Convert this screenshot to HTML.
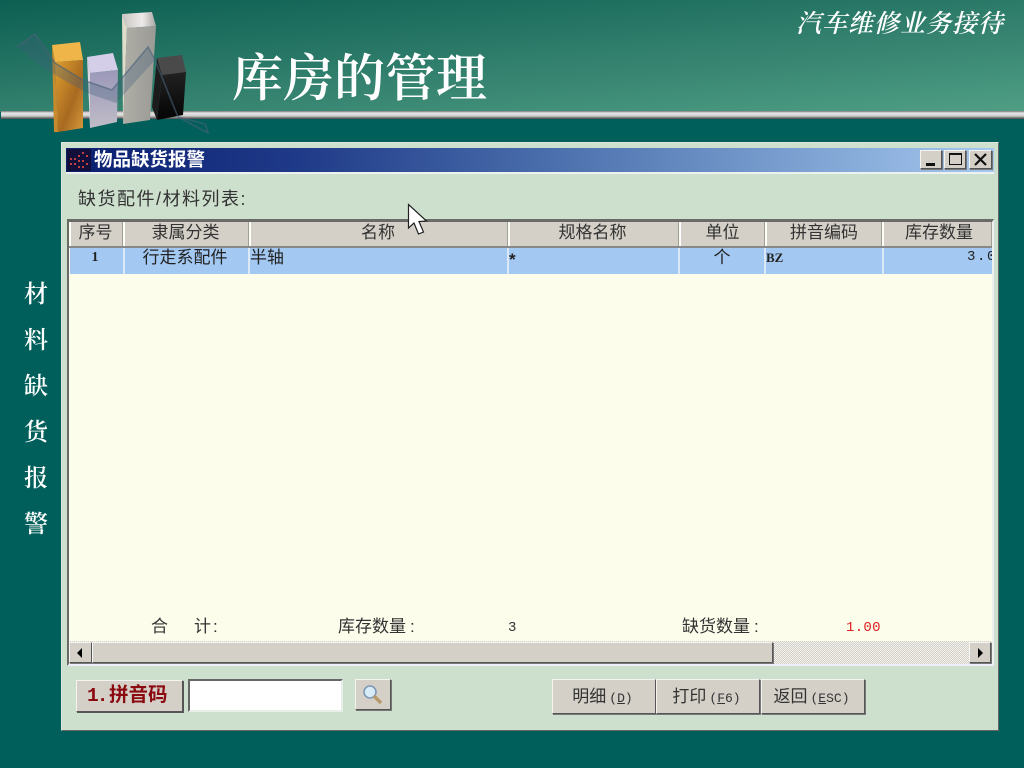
<!DOCTYPE html>
<html><head><meta charset="utf-8"><style>
html,body{margin:0;padding:0}
body{width:1024px;height:768px;overflow:hidden;position:relative;background:#005f5a;font-family:"Liberation Sans","Noto Sans CJK SC",sans-serif;}
div,span.a{position:absolute;white-space:nowrap}
.s{font-family:"Liberation Serif","Noto Serif CJK SC",serif;}
.h{top:222px;height:24px;background:#d4d0c8;border-left:1px solid #fff;border-right:1px solid #a0a09a;box-sizing:border-box;text-align:center;font-size:17px;line-height:22px;color:#333;}
.c{top:247px;height:27px;box-sizing:border-box;font-size:17px;line-height:22px;color:#222;}
.v{top:248px;width:2px;height:26px;background:#dbe8f5}
.b{background:#d4d0c8;border:1px solid;border-color:#f4f4f0 #555 #555 #f4f4f0;box-sizing:border-box;box-shadow:1px 1px 0 #777;}
.t{font-size:17px;color:#333;line-height:20px}
.k{text-align:center;font-size:17px;line-height:33px;color:#333;padding-right:3px}
.k i{font:13px/1 "Liberation Mono",monospace;margin-left:3px}
</style></head><body>
<div style="left:0;top:0;width:1024px;height:112px;background:linear-gradient(175deg,#0c5f52 0%,#2f7d6b 50%,#4f9e84 100%)"></div>
<div style="left:1px;top:111px;width:1023px;height:8px;background:linear-gradient(#777 0,#e6e6e6 25%,#cfcfcf 60%,#444 100%)"></div>

<svg style="position:absolute;left:0;top:0" width="230" height="140" viewBox="0 0 230 140">
<defs>
<linearGradient id="o" x1="0" y1="0" x2="1" y2="1"><stop offset="0" stop-color="#e0a030"/><stop offset=".6" stop-color="#a86a20"/><stop offset="1" stop-color="#d89a3c"/></linearGradient>
<linearGradient id="l" x1="0" y1="0" x2="0" y2="1"><stop offset="0" stop-color="#9a98b8"/><stop offset="1" stop-color="#c0bcc8"/></linearGradient>
<linearGradient id="g" x1="0" y1="0" x2="1" y2="0"><stop offset="0" stop-color="#b0aea6"/><stop offset="1" stop-color="#9a9a96"/></linearGradient>
<linearGradient id="gt" x1="0" y1="0" x2="1" y2="0"><stop offset="0" stop-color="#c8c4c0"/><stop offset=".6" stop-color="#eeeaea"/><stop offset="1" stop-color="#a8a6a2"/></linearGradient>
<linearGradient id="k" x1="0" y1="0" x2="0" y2="1"><stop offset="0" stop-color="#222"/><stop offset="1" stop-color="#040404"/></linearGradient>
</defs>
<polygon points="52,45 55,62 58,132 54,132" fill="#c78a2c"/>
<polygon points="52,45 80,42 83,60 55,62" fill="#efb548"/>
<polygon points="55,62 83,60 83,128 58,132" fill="url(#o)"/>
<polygon points="87,57 90,73 90,128" fill="#dcd8e0"/>
<polygon points="87,57 113,53 118,70 90,73" fill="#d4cee8"/>
<polygon points="90,73 118,70 117,122 90,128" fill="url(#l)"/>
<polygon points="122,14 127,28 123,124" fill="#e0dccc"/>
<polygon points="122,14 152,12 156,26 127,28" fill="url(#gt)"/>
<polygon points="127,28 156,26 150,120 123,124" fill="url(#g)"/>
<polygon points="157,58 182,55 186,72 162,75" fill="#4a4a4a"/>
<polygon points="157,58 162,75 157,120 152,107" fill="#1c1c1c"/>
<polygon points="162,75 186,72 183,115 157,120" fill="url(#k)"/>
<polygon points="17,47 35,34 55,63 83,80 112,90 148,47 155,60 116,103 87,93 55,75 43,68" fill="#3d5d78" fill-opacity=".32"/>
<path d="M17,47 L35,34 L55,63 L83,80 L112,90 L148,47 L155,60 L178,117 L208,133 L205,124 L178,117" fill="none" stroke="#4a6078" stroke-opacity=".6" stroke-width="1.6"/>
</svg>

<div class="s" style="left:232px;top:47px;font-size:51px;line-height:66px;color:#fff;font-weight:600">库房的管理</div>
<div class="s" style="left:796px;top:10px;font-size:25px;line-height:30px;color:#fff;font-style:italic;font-weight:600;letter-spacing:1px">汽车维修业务接待</div>

<div class="s" style="left:24px;top:272px;width:24px;font-size:24px;line-height:46px;color:#fff;white-space:normal;text-align:center;font-weight:600">材<br>料<br>缺<br>货<br>报<br>警</div>

<!-- window -->
<div style="left:61px;top:142px;width:938px;height:589px;background:#cddfcd;border:1px solid;border-color:#dfe8df #666 #666 #dfe8df;box-sizing:border-box"></div>
<div style="left:66px;top:148px;width:928px;height:24px;background:linear-gradient(90deg,#0a1f70 0%,#1f3a88 25%,#4f74b0 55%,#a4c8ee 100%)"></div>
<div style="left:66px;top:172px;width:928px;height:2px;background:#eef2ee"></div>
<svg style="position:absolute;left:67px;top:149px" width="24" height="22"><rect width="24" height="22" fill="#12103a"/><g fill="#c04040"><rect x="3" y="9" width="2" height="2"/><rect x="7" y="9" width="2" height="2"/><rect x="11" y="6" width="2" height="2"/><rect x="15" y="3" width="2" height="2"/><rect x="19" y="6" width="2" height="2"/><rect x="3" y="14" width="2" height="2"/><rect x="7" y="14" width="2" height="2"/><rect x="11" y="11" width="2" height="2"/><rect x="15" y="11" width="2" height="2"/><rect x="19" y="14" width="2" height="2"/><rect x="11" y="17" width="2" height="2"/><rect x="15" y="17" width="2" height="2"/></g></svg>
<div style="left:94px;top:148px;font-size:18.5px;font-weight:bold;line-height:24px;color:#fff">物品缺货报警</div>
<div class="b" style="left:920px;top:150px;width:22px;height:19px"><div style="left:5px;top:12px;width:9px;height:3px;background:#111"></div></div>
<div class="b" style="left:944px;top:150px;width:22px;height:19px"><div style="left:4px;top:2px;width:13px;height:12px;border:1px solid #111;border-top-width:2px;box-sizing:border-box"></div></div>
<div class="b" style="left:969px;top:150px;width:23px;height:19px"><svg style="position:absolute;left:4px;top:2px" width="13" height="13"><path d="M1,1 L12,12 M12,1 L1,12" stroke="#111" stroke-width="2.2"/></svg></div>

<div style="left:78px;top:187px;font-size:18px;line-height:24px;color:#333;letter-spacing:1.5px">缺货配件/材料列表:</div>

<!-- table -->
<div style="left:67px;top:219px;width:927px;height:447px;background:#fdfdec;border-top:3px solid #6a6a66;border-left:2px solid #6a6a66;border-right:2px solid #eee;border-bottom:2px solid #eef;box-sizing:border-box"></div>
<div style="left:69px;top:246px;width:923px;height:2px;background:#888"></div>
<div class="h" style="left:70px;width:53px;padding-right:2px">序号</div>
<div class="h" style="left:124px;width:125px;padding-right:2px">隶属分类</div>
<div class="h" style="left:250px;width:258px;padding-right:2px">名称</div>
<div class="h" style="left:509px;width:170px;padding-right:3px">规格名称</div>
<div class="h" style="left:680px;width:85px">单位</div>
<div class="h" style="left:766px;width:116px">拼音编码</div>
<div class="h" style="left:883px;width:109px;padding-left:3px">库存数量</div>

<div style="left:70px;top:248px;width:922px;height:26px;background:#a3c8f2"></div>
<div class="v" style="left:123px"></div><div class="v" style="left:248px"></div><div class="v" style="left:507px"></div><div class="v" style="left:678px"></div><div class="v" style="left:764px"></div><div class="v" style="left:882px"></div>
<div class="c" style="left:69px;top:248px;width:52px;text-align:center;font-family:'Liberation Serif',serif;font-weight:bold;font-size:14px;line-height:19px">1</div>
<div class="c" style="left:123px;top:247px;width:124px;text-align:center">行走系配件</div>
<div class="c" style="left:250px;top:247px;width:258px">半轴</div>
<div class="c" style="left:509px;top:248px;width:20px;font-weight:bold;line-height:24px">*</div>
<div class="c" style="left:680px;top:247px;width:84px;text-align:center">个</div>
<div class="c" style="left:766px;top:248px;width:60px;font-family:'Liberation Serif',serif;font-size:13px;font-weight:bold;line-height:19px">BZ</div>
<div class="c" style="left:884px;top:248px;width:108px;overflow:hidden;padding-left:83px;font-family:'Liberation Mono',monospace;font-size:14px;line-height:18px;letter-spacing:1.6px">3.0</div>

<div class="t" style="left:151px;top:617px">合</div>
<div class="t" style="left:194px;top:617px">计<span style="margin-left:2px">:</span></div>
<div class="t" style="left:338px;top:617px">库存数量<span style="margin-left:4px">:</span></div>
<div class="t" style="left:508px;top:618px;font-family:'Liberation Mono',monospace;font-size:14px">3</div>
<div class="t" style="left:682px;top:617px">缺货数量<span style="margin-left:4px">:</span></div>
<div class="t" style="left:846px;top:618px;font-family:'Liberation Mono',monospace;font-size:14px;color:#e02020;letter-spacing:.3px">1.00</div>

<!-- scrollbar -->
<div style="left:69px;top:641px;width:923px;height:23px;background:repeating-conic-gradient(#d4d0c8 0 25%,#f2f2ee 0 50%) 0 0/2px 2px"></div>
<div class="b" style="left:69px;top:642px;width:23px;height:21px"><svg style="position:absolute;left:6px;top:5px" width="8" height="10"><path d="M6,0 L1,5 L6,10 Z" fill="#000"/></svg></div>
<div class="b" style="left:92px;top:642px;width:681px;height:21px"></div>
<div class="b" style="left:969px;top:642px;width:22px;height:21px"><svg style="position:absolute;left:7px;top:5px" width="8" height="10"><path d="M1,0 L6,5 L1,10 Z" fill="#000"/></svg></div>

<!-- bottom -->
<div class="b" style="left:76px;top:680px;width:107px;height:32px;box-shadow:1px 1px 0 #555;padding-left:10px;font-size:19.5px;font-weight:bold;line-height:28px;color:#8a0a10"><span style="display:inline-block;width:22px;font-family:'Liberation Mono',monospace;letter-spacing:-2px">1.</span>拼音码</div>
<div style="left:188px;top:679px;width:155px;height:33px;background:#fff;border:2px solid;border-color:#666 #e8efe8 #e8efe8 #666;box-sizing:border-box"></div>
<div class="b" style="left:355px;top:679px;width:36px;height:31px"><svg style="position:absolute;left:4px;top:3px" width="26" height="24"><circle cx="10" cy="9" r="6" fill="#d8ecf8" stroke="#7f98b8" stroke-width="1.6"/><path d="M14,13 L21,20" stroke="#b89a68" stroke-width="3.4"/></svg></div>
<div class="b k" style="left:552px;top:679px;width:104px;height:35px">明细<i>(<u>D</u>)</i></div>
<div class="b k" style="left:656px;top:679px;width:104px;height:35px">打印<i>(<u>F</u>6)</i></div>
<div class="b k" style="left:761px;top:679px;width:104px;height:35px">返回<i>(<u>E</u>SC)</i></div>

<!-- cursor -->
<svg style="position:absolute;left:406px;top:203px" width="24" height="34"><path d="M2.5,1.5 L2.5,25 L8,20 L12.5,31 L17.5,29 L13,18.5 L20.5,18 Z" fill="#fff" stroke="#222" stroke-width="1.2"/></svg>
</body></html>
